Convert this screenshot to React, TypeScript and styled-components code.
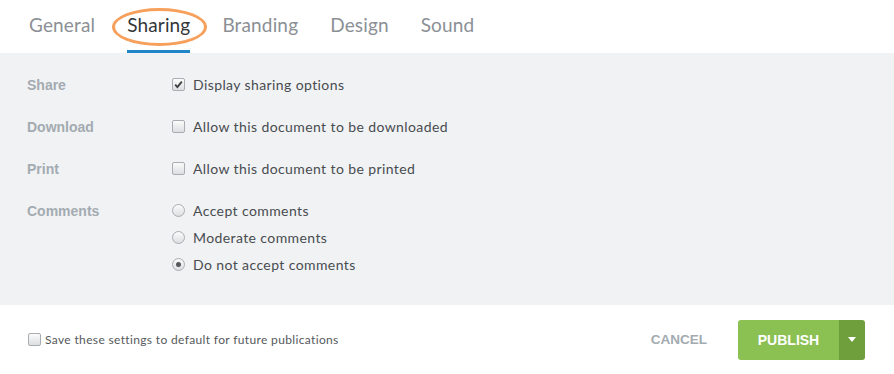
import React from 'react'
import styled, { createGlobalStyle } from 'styled-components'

const GlobalStyle = createGlobalStyle`
    html, body {
        margin: 0;
        padding: 0;
        background: #ffffff;
    }
    body {
        font-family: Lato, 'Open Sans', sans-serif;
    }
`

const Page = styled.div`
    width: 894px;
    height: 374px;
    display: flex;
    flex-direction: column;
`

const TabBar = styled.div`
    height: 53px;
    display: flex;
    align-items: stretch;
    padding-left: 13px;
    background: #ffffff;
`

const Tab = styled.div<{ $active?: boolean }>`
    position: relative;
    display: flex;
    align-items: center;
    padding: 0 16px 5px 16px;
    font-family: Lato, 'Open Sans', sans-serif;
    font-size: 19px;
    letter-spacing: 0.15px;
    color: ${(p) => (p.$active ? '#333638' : '#8b9095')};

    &::after {
        content: '';
        display: ${(p) => (p.$active ? 'block' : 'none')};
        position: absolute;
        left: 16px;
        right: 16px;
        bottom: 0;
        height: 3px;
        background: #1f87c9;
    }
`

const Highlight = styled.span`
    position: absolute;
    left: 1px;
    right: -1px;
    top: 8px;
    height: 32px;
    border: 3px solid #f6a05c;
    border-radius: 50%;
    pointer-events: none;
`

const Panel = styled.div`
    height: 252px;
    box-sizing: border-box;
    background: #f1f2f4;
    padding: 11px 27px 0 27px;
`

const Row = styled.div`
    display: flex;
    align-items: flex-start;
    padding-top: 7px;
    padding-bottom: 8px;
    min-height: 27px;
`

const Label = styled.div`
    width: 145px;
    flex-shrink: 0;
    padding-top: 2px;
    line-height: 25px;
    font-family: 'Liberation Sans', Arial, sans-serif;
    font-weight: bold;
    font-size: 14px;
    color: #a3abb1;
`

const Options = styled.div`
    display: flex;
    flex-direction: column;
`

const Option = styled.label`
    display: flex;
    align-items: center;
    gap: 8px;
    height: 27px;
    font-size: 14px;
    letter-spacing: 0.4px;
    color: #484c50;
`

const Box = styled.span<{ $round?: boolean }>`
    position: relative;
    width: 11px;
    height: 11px;
    flex-shrink: 0;
    border: 1px solid #a9adb1;
    border-radius: ${(p) => (p.$round ? '50%' : '2px')};
    background: linear-gradient(#fbfbfb, #dcdee0);
    display: flex;
    align-items: center;
    justify-content: center;
`

const Dot = styled.span`
    width: 5px;
    height: 5px;
    border-radius: 50%;
    background: #55595c;
`

const Footer = styled.div`
    flex: 1;
    display: flex;
    align-items: center;
    justify-content: space-between;
    padding: 0 29px 0 28px;
`

const DefaultOption = styled.label`
    display: flex;
    align-items: center;
    gap: 4px;
    font-size: 12px;
    letter-spacing: 0.35px;
    color: #55595c;
`

const Actions = styled.div`
    display: flex;
    align-items: center;
    gap: 31px;
`

const CancelButton = styled.button`
    border: none;
    background: none;
    padding: 0;
    font-family: 'Liberation Sans', Arial, sans-serif;
    font-weight: bold;
    font-size: 13.5px;
    color: #a3abb1;
`

const SplitButton = styled.div`
    display: flex;
    height: 40px;
    border-radius: 3px;
    overflow: hidden;
`

const PublishButton = styled.button`
    width: 101px;
    border: none;
    background: #8bc153;
    color: #ffffff;
    font-family: 'Liberation Sans', Arial, sans-serif;
    font-weight: bold;
    font-size: 14px;
`

const CaretButton = styled.button`
    width: 26px;
    border: none;
    background: #6f9e3d;
    display: flex;
    align-items: center;
    justify-content: center;
    padding: 0;
`

const Check = () => (
    <svg width='9' height='9' viewBox='0 0 9 9'>
        <path d='M1.2 4.6 L3.4 7 L7.8 1.6' fill='none' stroke='#3a3d40' strokeWidth='1.8' />
    </svg>
)

const tabs = ['General', 'Sharing', 'Branding', 'Design', 'Sound']

const App = () => {
    return (
        <Page>
            <GlobalStyle />
            <TabBar>
                {tabs.map((t) => (
                    <Tab key={t} $active={t === 'Sharing'}>
                        {t}
                        {t === 'Sharing' && <Highlight />}
                    </Tab>
                ))}
            </TabBar>
            <Panel>
                <Row>
                    <Label>Share</Label>
                    <Options>
                        <Option>
                            <Box>
                                <Check />
                            </Box>
                            Display sharing options
                        </Option>
                    </Options>
                </Row>
                <Row>
                    <Label>Download</Label>
                    <Options>
                        <Option>
                            <Box />
                            Allow this document to be downloaded
                        </Option>
                    </Options>
                </Row>
                <Row>
                    <Label>Print</Label>
                    <Options>
                        <Option>
                            <Box />
                            Allow this document to be printed
                        </Option>
                    </Options>
                </Row>
                <Row>
                    <Label>Comments</Label>
                    <Options>
                        <Option>
                            <Box $round />
                            Accept comments
                        </Option>
                        <Option>
                            <Box $round />
                            Moderate comments
                        </Option>
                        <Option>
                            <Box $round>
                                <Dot />
                            </Box>
                            Do not accept comments
                        </Option>
                    </Options>
                </Row>
            </Panel>
            <Footer>
                <DefaultOption>
                    <Box />
                    Save these settings to default for future publications
                </DefaultOption>
                <Actions>
                    <CancelButton type='button'>CANCEL</CancelButton>
                    <SplitButton>
                        <PublishButton type='button'>PUBLISH</PublishButton>
                        <CaretButton type='button'>
                            <svg width='8' height='5' viewBox='0 0 8 5'>
                                <path d='M0 0 H8 L4 5 Z' fill='#ffffff' />
                            </svg>
                        </CaretButton>
                    </SplitButton>
                </Actions>
            </Footer>
        </Page>
    )
}

export default App
